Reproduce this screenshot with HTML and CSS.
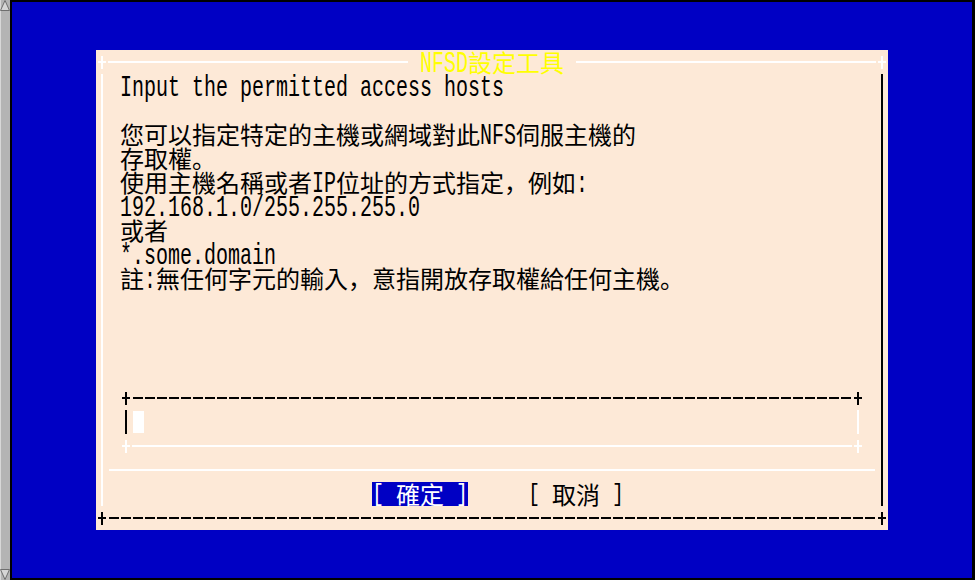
FILE: index.html
```html
<!DOCTYPE html>
<html lang="zh-Hant">
<head>
<meta charset="utf-8">
<title>NFSD設定工具</title>
<link rel="stylesheet" href="styles.css">
</head>
<body>
<div class="win">
  <div class="sb">
    <svg class="arr" width="10" height="11" viewBox="0 0 10 11"><polygon points="0.5,10.5 5,0.5 9.5,10.5"/></svg>
    <div class="track"></div>
    <svg class="arr" width="10" height="11" viewBox="0 0 10 11"><polygon points="0.5,0.5 5,10.5 9.5,0.5"/></svg>
  </div>
  <div class="screen">
    <div class="box dialog">
      <div class="corner hi"></div>
      <div class="hedge hi solid"><div class="title"><span class="a">NFSD</span><span class="c">設定工具</span></div></div>
      <div class="corner hi"></div>
      <div class="vedge hi"></div>
      <div class="dbody">
        <div class="ln"><span class="a">Input the permitted access hosts</span></div>
        <div class="ln"></div>
        <div class="ln"><span class="c">您可以指定特定的主機或網域對此</span><span class="a">NFS</span><span class="c">伺服主機的</span></div>
        <div class="ln"><span class="c">存取權</span><span class="p">。</span></div>
        <div class="ln"><span class="c">使用主機名稱或者</span><span class="a">IP</span><span class="c">位址的方式指定</span><span class="p">，</span><span class="c">例如</span><span class="a">:</span></div>
        <div class="ln"><span class="a">192.168.1.0/255.255.255.0</span></div>
        <div class="ln"><span class="c">或者</span></div>
        <div class="ln"><span class="a">*.some.domain</span></div>
        <div class="ln"><span class="c">註</span><span class="a">:</span><span class="c">無任何字元的輸入</span><span class="p">，</span><span class="c">意指開放存取權給任何主機</span><span class="p">。</span></div>
        <div class="box field">
          <div class="corner hi"></div>
          <div class="hedge hi"></div>
          <div class="corner hi"></div>
          <div class="vedge hi"></div>
          <div class="fbody"><div class="cursor"></div></div>
          <div class="vedge lo"></div>
          <div class="corner lo"></div>
          <div class="hedge lo solid"></div>
          <div class="corner lo"></div>
        </div>
        <div class="sep"></div>
        <div class="btns">
          <div class="btn sel"><span class="b">[ </span><span class="c">確定</span><span class="b"> ]</span></div>
          <div class="btn"><span class="b">[ </span><span class="c">取消</span><span class="b"> ]</span></div>
        </div>
      </div>
      <div class="vedge lo"></div>
      <div class="corner lo"></div>
      <div class="hedge lo"></div>
      <div class="corner lo"></div>
    </div>
  </div>
</div>
</body>
</html>
```

FILE: styles.css
```css
* {
  box-sizing: border-box;
  margin: 0;
  padding: 0;
}

html, body {
  width: 975px;
  height: 580px;
  overflow: hidden;
}

body {
  background: #000;
  font-family: "Liberation Mono", monospace;
  color: #000;
}

.win {
  display: flex;
  width: 975px;
  height: 580px;
}

/* left scrollbar */
.sb {
  width: 12px;
  flex: none;
  display: flex;
  flex-direction: column;
  background: #b4b4b4;
  border-left: 1px solid #d8d8d8;
  border-right: 2px solid #000;
}

.sb .arr {
  display: block;
  margin-left: -1px;
}

.sb .arr polygon {
  fill: #d6d6d6;
  stroke: #6e6e6e;
  stroke-width: 1;
}

.track {
  flex: 1;
}

/* blue console screen */
.screen {
  width: 963px;
  height: 580px;
  flex: none;
  background: #0000c4;
  border-top: 2px solid #000;
  border-right: 3px solid #000;
  border-bottom: 2px solid #000;
  padding: 48px 0 0 84px;
}

/* text-mode boxes drawn with + - | glyph look */
.box {
  display: grid;
  grid-template-columns: 12px 1fr 12px;
  grid-template-rows: 24px 1fr 24px;
}

.dialog {
  width: 792px;
  height: 480px;
  background: #fde9d7;
  --hi: #ffffff;
  --lo: #000000;
}

.field {
  width: 744px;
  height: 72px;
  margin-left: 12px;
  margin-top: 96px;
  --hi: #000000;
  --lo: #ffffff;
}

.hi { --c: var(--hi); }
.lo { --c: var(--lo); }

.corner {
  background:
    linear-gradient(var(--c), var(--c)) 2px 11px / 8px 2px no-repeat,
    linear-gradient(var(--c), var(--c)) 5px 6px / 2px 13px no-repeat;
}

.hedge {
  background: repeating-linear-gradient(90deg, transparent 0 1px, var(--c) 1px 11px, transparent 11px 12px) 0 11px / 100% 2px no-repeat;
}

.hedge.solid {
  background: linear-gradient(var(--c), var(--c)) 0 11px / 100% 2px no-repeat;
}

.vedge {
  background: linear-gradient(var(--c), var(--c)) 5px 0 / 2px 100% no-repeat;
}

.dialog > .hedge {
  display: flex;
  justify-content: center;
}

.title {
  display: flex;
  padding: 0 12px;
  background: #fde9d7;
  color: #ffff00;
}

.dbody {
  display: flex;
  flex-direction: column;
}

.ln {
  display: flex;
  height: 24px;
  padding-left: 12px;
}

.a, .b, .c, .p {
  display: block;
  white-space: pre;
  line-height: 24px;
}

.a, .b {
  font-family: "Liberation Mono", monospace;
  font-size: 20px;
}

.a {
  transform: translateY(3px) scaleY(1.45);
}

.b {
  transform: translateY(1px) scaleY(1.15);
}

.c {
  font-family: "Noto Sans CJK TC", sans-serif;
  font-size: 24px;
}

.p {
  font-family: "Noto Sans CJK SC", sans-serif;
  font-size: 24px;
}

.fbody {
  display: flex;
  align-items: center;
}

.cursor {
  width: 11px;
  height: 22px;
  margin-left: 1px;
  background: #ffffff;
}

.sep {
  height: 24px;
  margin: 0 1px;
  background: linear-gradient(#ffffff, #ffffff) 0 11px / 100% 2px no-repeat;
}

.btns {
  display: flex;
  height: 24px;
  padding-left: 264px;
  gap: 60px;
}

.btn {
  display: flex;
}

.btn.sel {
  background: #0000c4;
  color: #ffffff;
}
```
